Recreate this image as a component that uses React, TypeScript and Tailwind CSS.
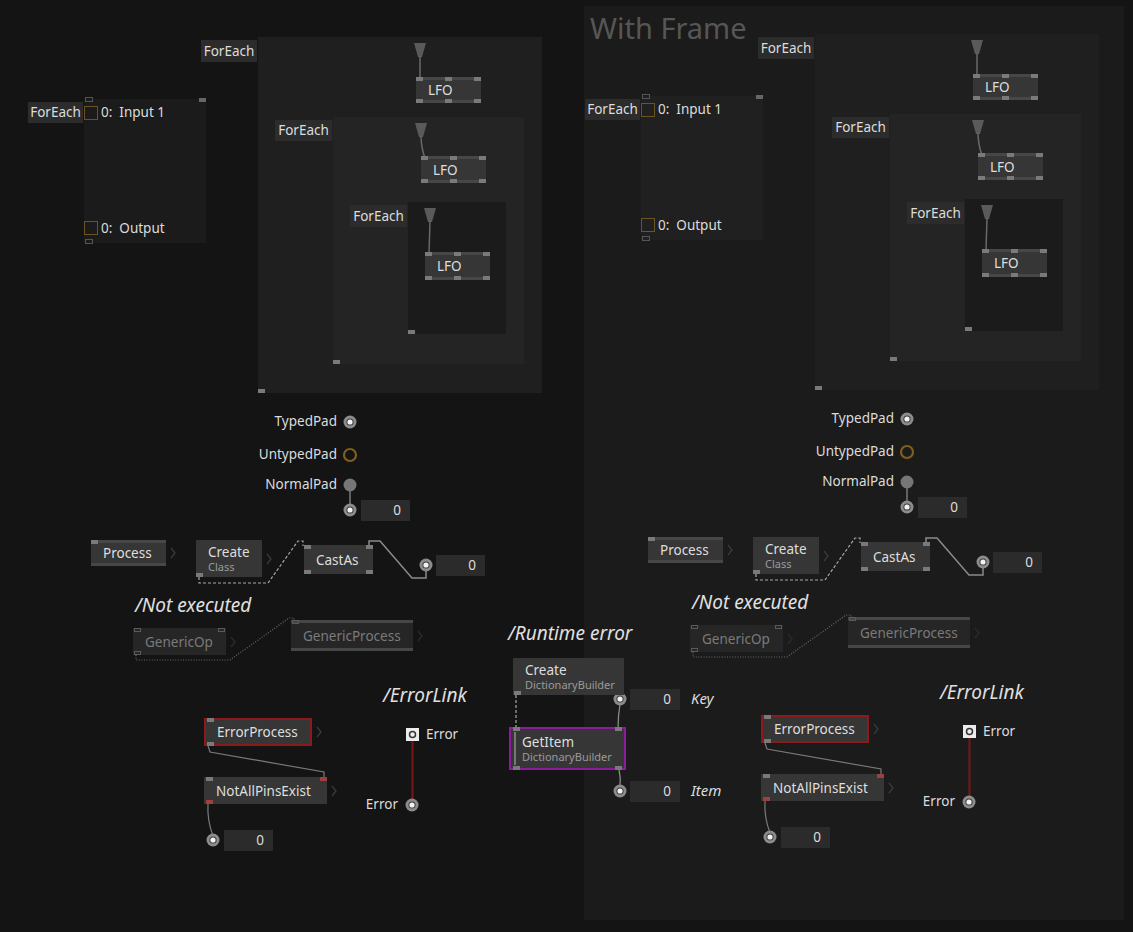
import React from "react";

type Pin = { x: number; b?: boolean; c?: string; o?: boolean };

function Pins({ pins, h }: { pins: Pin[]; h: number }) {
  return (
    <>
      {pins.map((p, i) => (
        <div
          key={i}
          className="absolute"
          style={{
            left: p.x,
            top: p.b ? h - 4 : 0,
            width: 7,
            height: 4,
            background: p.o ? "transparent" : p.c || "#7a7a7a",
            border: p.o ? "1px solid #5a5a5a" : undefined,
          }}
        />
      ))}
    </>
  );
}

function Chevron({ x, y, dim }: { x: number; y: number; dim?: boolean }) {
  return (
    <svg className="absolute" style={{ left: x, top: y - 6 }} width="6" height="12" viewBox="0 0 6 12">
      <path d="M1 1 L5 6 L1 11" fill="none" stroke={dim ? "#2c2c2c" : "#3a3a3a"} strokeWidth="1.3" />
    </svg>
  );
}

type NodeProps = {
  x: number;
  y: number;
  w: number;
  h: number;
  label: string;
  sub?: string;
  pins?: Pin[];
  strips?: boolean;
  border?: string;
  dim?: boolean;
  arrow?: boolean;
  bar?: boolean;
};

function Node({ x, y, w, h, label, sub, pins = [], strips, border, dim, arrow = true, bar }: NodeProps) {
  return (
    <>
      <div
        className={`absolute ${dim ? "bg-[#262626]" : "bg-[#363636]"}`}
        style={{ left: x, top: y, width: w, height: h, boxSizing: "border-box", border: border ? `2px solid ${border}` : undefined }}
      >
        {strips && (
          <>
            <div className="absolute left-0 right-0 top-0 h-[3px] bg-[#474747]" />
            <div className="absolute left-0 right-0 bottom-0 h-[3px] bg-[#474747]" />
          </>
        )}
        {bar && <div className="absolute left-[3px] top-[3px] bottom-[3px] w-[2px] bg-[#777]" />}
        <div className={`absolute inset-0 flex flex-col justify-center ${border ? "pl-[11px]" : "pl-3"}`}>
          <div className={`text-[13.5px] leading-[16px] ${dim ? "text-[#7a7a7a]" : "text-[#dedede]"}`}>{label}</div>
          {sub && <div className="text-[11px] leading-[13px] text-[#9a9a9a]">{sub}</div>}
        </div>
        <div className="absolute" style={{ left: border ? -2 : 0, top: border ? -2 : 0, width: w, height: h }}>
          <Pins pins={pins} h={h} />
        </div>
      </div>
      {arrow && <Chevron x={x + w + 4} y={y + h / 2} dim={dim} />}
    </>
  );
}

function Label({ x, y, w, h, text }: { x: number; y: number; w: number; h: number; text: string }) {
  return (
    <div
      className="absolute flex items-center justify-center bg-[#2c2c2c] text-[13.5px] text-[#dcdcdc]"
      style={{ left: x, top: y, width: w, height: h }}
    >
      {text}
    </div>
  );
}

function IOBox({ x, y, w = 49 }: { x: number; y: number; w?: number }) {
  return (
    <div
      className="absolute flex items-center justify-end pr-[9px] bg-[#2b2b2b] text-[13.5px] text-[#dcdcdc]"
      style={{ left: x, top: y, width: w, height: 21 }}
    >
      0
    </div>
  );
}

function Text({ x, y, text, right, className }: { x: number; y: number; text: string; right?: boolean; className: string }) {
  return (
    <div
      className={`absolute whitespace-pre flex items-center ${className}`}
      style={right ? { right: 1133 - x, top: y - 11, height: 22 } : { left: x, top: y - 11, height: 22 }}
    >
      {text}
    </div>
  );
}

function Box({ x, y, w, h, cls }: { x: number; y: number; w: number; h: number; cls: string }) {
  return <div className={`absolute ${cls}`} style={{ left: x, top: y, width: w, height: h }} />;
}

function TypedPad({ cx, cy }: { cx: number; cy: number }) {
  return (
    <g>
      <circle cx={cx} cy={cy} r={6.5} fill="#8c8c8c" />
      <circle cx={cx} cy={cy} r={3.6} fill="#3a3a3a" />
      <circle cx={cx} cy={cy} r={2.6} fill="#f2f2f2" />
    </g>
  );
}

function Inlet({ x, y }: { x: number; y: number }) {
  return <polygon points={`${x},${y} ${x + 12},${y} ${x + 8},${y + 14} ${x + 4},${y + 14}`} fill="#5a5a5a" />;
}

function Group({ dx, dy, r0 }: { dx: number; dy: number; r0: string }) {
  const X = (v: number) => v + dx;
  const Y = (v: number) => v + dy;
  const lfoPins: Pin[] = [
    { x: 0 },
    { x: 29 },
    { x: 58 },
    { x: 0, b: true },
    { x: 29, b: true },
    { x: 58, b: true },
  ];
  const txt = "text-[13.5px] text-[#dcdcdc]";
  const ital = "text-[19px] italic text-[#e0e0e0]";
  return (
    <>
      {/* regions */}
      <Box x={X(258)} y={Y(37)} w={284} h={356} cls="bg-[#1f1f1f]" />
      <Box x={X(333)} y={Y(117)} w={191} h={247} cls="bg-[#242424]" />
      <Box x={X(408)} y={Y(202)} w={98} h={132} cls="bg-[#1b1b1b]" />
      <Box x={X(84)} y={Y(99)} w={122} h={144} cls={r0} />

      <Box x={X(258)} y={Y(389)} w={7} h={4} cls="bg-[#7a7a7a]" />
      <Box x={X(333)} y={Y(360)} w={7} h={4} cls="bg-[#7a7a7a]" />
      <Box x={X(408)} y={Y(330)} w={7} h={4} cls="bg-[#7a7a7a]" />

      <Label x={X(201)} y={Y(40)} w={56} h={22} text="ForEach" />
      <Label x={X(275)} y={Y(120)} w={57} h={21} text="ForEach" />
      <Label x={X(350)} y={Y(205)} w={57} h={22} text="ForEach" />
      <Label x={X(28)} y={Y(102)} w={55} h={21} text="ForEach" />

      {/* left small region pins */}
      <Box x={X(85)} y={Y(97)} w={8} h={5} cls="border border-[#555]" />
      <Box x={X(199)} y={Y(98)} w={7} h={4} cls="bg-[#666]" />
      <Box x={X(85)} y={Y(239)} w={8} h={5} cls="border border-[#555]" />
      <Box x={X(84)} y={Y(106)} w={14} h={14} cls="border border-[#6e5322]" />
      <Box x={X(84)} y={Y(221)} w={14} h={14} cls="border border-[#6e5322]" />
      <Text x={X(101)} y={Y(112)} text="0:  Input 1" className={txt} />
      <Text x={X(101)} y={Y(228)} text="0:  Output" className={txt} />

      {/* links & pads */}
      <svg className="absolute left-0 top-0" width="1133" height="932" style={{ pointerEvents: "none" }}>
        <Inlet x={X(414)} y={Y(43)} />
        <path d={`M${X(420)} ${Y(56)} V${Y(78)}`} stroke="#6a6a6a" strokeWidth="1.5" fill="none" />
        <Inlet x={X(415)} y={Y(123)} />
        <path d={`M${X(421)} ${Y(136)} Q${X(421)} ${Y(146)} ${X(424.5)} ${Y(157)}`} stroke="#6a6a6a" strokeWidth="1.5" fill="none" />
        <Inlet x={X(424)} y={Y(208)} />
        <path d={`M${X(430)} ${Y(221)} L${X(429)} ${Y(253)}`} stroke="#6a6a6a" strokeWidth="1.5" fill="none" />

        <TypedPad cx={X(350)} cy={Y(422)} />
        <circle cx={X(350)} cy={Y(455)} r={6} fill="none" stroke="#7f5f1e" strokeWidth="2.2" />
        <path d={`M${X(350)} ${Y(485)} V${Y(510)}`} stroke="#7a7a7a" strokeWidth="1.5" />
        <circle cx={X(350)} cy={Y(485)} r={6.5} fill="#767676" />
        <TypedPad cx={X(350)} cy={Y(510)} />

        <path
          d={`M${X(199)} ${Y(577)} V${Y(583)} H${X(268)} L${X(298)} ${Y(541)} H${X(303)} V${Y(546)}`}
          stroke="#a8a8a8"
          strokeWidth="1.2"
          strokeDasharray="3 2"
          fill="none"
        />
        <path
          d={`M${X(369)} ${Y(546)} V${Y(541)} H${X(380)} L${X(412)} ${Y(578)} H${X(426)} V${Y(566)}`}
          stroke="#8a8a8a"
          strokeWidth="1.5"
          fill="none"
        />
        <TypedPad cx={X(426)} cy={Y(565)} />

        <path
          d={`M${X(136)} ${Y(655)} V${Y(660)} H${X(230)} L${X(289)} ${Y(618)} H${X(294)} V${Y(622)}`}
          stroke="#6a6a6a"
          strokeWidth="1.2"
          strokeDasharray="1 1.6"
          fill="none"
        />

        <path d={`M${X(208)} ${Y(746)} L${X(210)} ${Y(752)} L${X(324)} ${Y(772)} V${Y(778)}`} stroke="#7a7a7a" strokeWidth="1.2" fill="none" />
        <path d={`M${X(208)} ${Y(804)} Q${X(207)} ${Y(820)} ${X(213)} ${Y(836)}`} stroke="#7a7a7a" strokeWidth="1.2" fill="none" />
        <TypedPad cx={X(213)} cy={Y(840)} />

        <path d={`M${X(412.5)} ${Y(741)} V${Y(800)}`} stroke="#7a1616" strokeWidth="2" />
        <rect x={X(406)} y={Y(728)} width={13} height={13} fill="#ececec" />
        <circle cx={X(412.5)} cy={Y(734.5)} r={3} fill="none" stroke="#333" strokeWidth="1.5" />
        <TypedPad cx={X(412)} cy={Y(805)} />
      </svg>

      <Node x={X(416)} y={Y(77)} w={65} h={26} label="LFO" strips arrow={false} pins={lfoPins} />
      <Node x={X(421)} y={Y(156)} w={65} h={27} label="LFO" strips arrow={false} pins={lfoPins} />
      <Node x={X(425)} y={Y(252)} w={65} h={28} label="LFO" strips arrow={false} pins={lfoPins} />

      <Text x={X(337)} y={Y(421)} right text="TypedPad" className={txt} />
      <Text x={X(337)} y={Y(454)} right text="UntypedPad" className={txt} />
      <Text x={X(337)} y={Y(484)} right text="NormalPad" className={txt} />
      <IOBox x={X(361)} y={Y(500)} />

      <Node x={X(91)} y={Y(540)} w={75} h={26} label="Process" strips pins={[{ x: 0 }]} />
      <Node x={X(196)} y={Y(540)} w={66} h={37} label="Create" sub="Class" pins={[{ x: 0, b: true }]} />
      <Node
        x={X(304)}
        y={Y(545)}
        w={69}
        h={29}
        label="CastAs"
        arrow={false}
        pins={[{ x: 0 }, { x: 0, b: true }, { x: 62 }, { x: 62, b: true }]}
      />
      <IOBox x={X(436)} y={Y(555)} />

      <Text x={X(135)} y={Y(605)} text="/Not executed" className={ital} />
      <Node
        x={X(133)}
        y={Y(628)}
        w={93}
        h={27}
        label="GenericOp"
        dim
        pins={[{ x: 1, o: true }, { x: 85, o: true }, { x: 1, b: true, o: true }]}
      />
      <Node x={X(291)} y={Y(620)} w={122} h={31} label="GenericProcess" dim strips pins={[{ x: 1, o: true }]} />

      <Text x={X(383)} y={Y(695)} text="/ErrorLink" className={ital} />
      <Node
        x={X(204)}
        y={Y(718)}
        w={108}
        h={28}
        label="ErrorProcess"
        border="#8b1a1a"
        pins={[{ x: 3 }, { x: 3, b: true }]}
      />
      <Node
        x={X(204)}
        y={Y(777)}
        w={123}
        h={27}
        label="NotAllPinsExist"
        pins={[{ x: 2 }, { x: 116, c: "#9c4040" }, { x: 2, b: true, c: "#9c4040" }]}
      />
      <IOBox x={X(224)} y={Y(830)} />

      <Text x={X(426)} y={Y(734)} text="Error" className={txt} />
      <Text x={X(398)} y={Y(804)} right text="Error" className={txt} />
    </>
  );
}

function RuntimeError() {
  return (
    <>
      <svg className="absolute left-0 top-0" width="1133" height="932" style={{ pointerEvents: "none" }}>
        <path d="M516 695 V730" stroke="#a8a8a8" strokeWidth="1.2" strokeDasharray="3 2" fill="none" />
        <path d="M620 704 Q618 716 618 729" stroke="#8a8a8a" strokeWidth="1.3" fill="none" />
        <path d="M619 770 Q621 778 620 786" stroke="#8a8a8a" strokeWidth="1.3" fill="none" />
        <TypedPad cx={620} cy={699} />
        <TypedPad cx={620} cy={791} />
      </svg>
      <Text x={508} y={633} text="/Runtime error" className="text-[19px] italic text-[#e0e0e0]" />
      <Node x={513} y={658} w={111} h={37} label="Create" sub="DictionaryBuilder" arrow={false} pins={[{ x: 1, b: true }]} />
      <IOBox x={630} y={689} w={50} />
      <Text x={691} y={698} text="Key" className="text-[15px] italic text-[#dcdcdc]" />
      <Node
        x={509}
        y={727}
        w={117}
        h={43}
        label="GetItem"
        sub="DictionaryBuilder"
        border="#8c1c9c"
        bar
        arrow={false}
        pins={[{ x: 4 }, { x: 106 }, { x: 4, b: true }, { x: 106, b: true }]}
      />
      <IOBox x={630} y={781} w={50} />
      <Text x={691} y={790} text="Item" className="text-[15px] italic text-[#dcdcdc]" />
    </>
  );
}

export default function App() {
  return (
    <div
      className="relative w-[1133px] h-[932px] overflow-hidden bg-[#141414]"
      style={{ fontFamily: '"Noto Sans", "Open Sans", sans-serif' }}
    >
      <div className="absolute left-[584px] top-[6px] w-[540px] h-[914px] bg-[#1b1b1b]">
        <div className="absolute left-[6px] top-[3px] text-[29px] leading-[38px] text-[#565656]">With Frame</div>
      </div>
      <Group dx={0} dy={0} r0="bg-[#1b1b1b]" />
      <Group dx={557} dy={-3} r0="bg-[#202020]" />
      <RuntimeError />
    </div>
  );
}
